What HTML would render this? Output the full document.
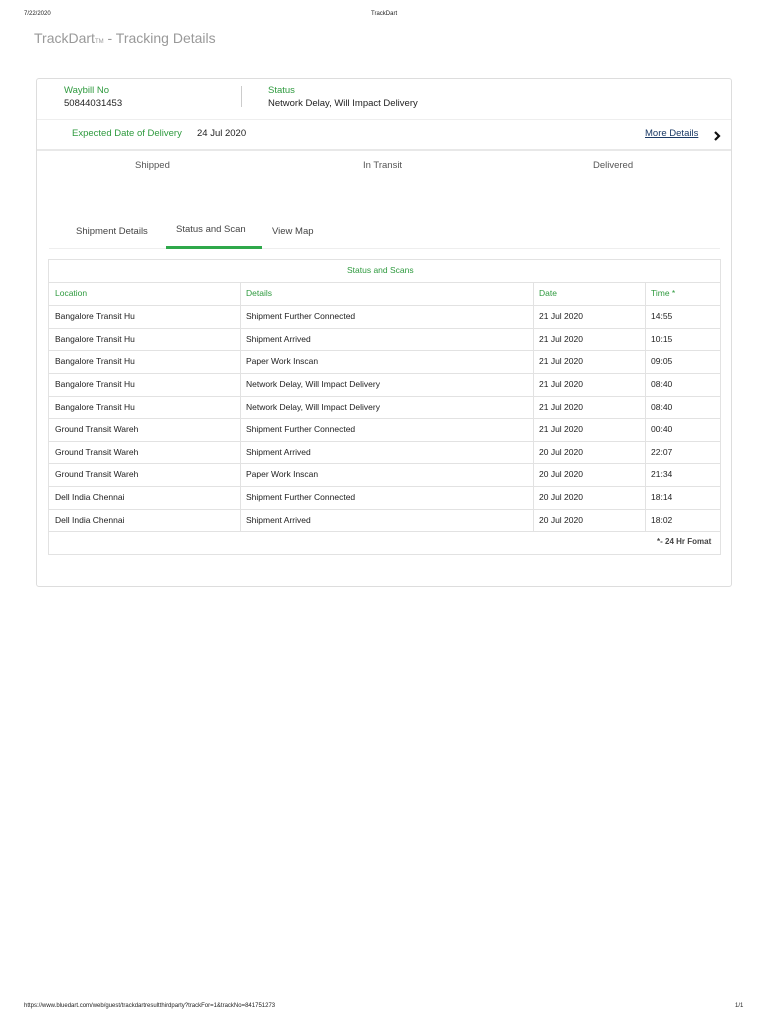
<!DOCTYPE html>
<html><head><meta charset="utf-8"><style>
body{margin:0;width:768px;height:1024px;background:#fff;font-family:"Liberation Sans",sans-serif;color:#222;position:relative;overflow:hidden}
.a{position:absolute;white-space:nowrap}
.g{color:#2e9a3e}
.t{font-size:8.5px}
.hl{position:absolute;height:1px;background:#e2e2e2}
.vl{position:absolute;width:1px;background:#e2e2e2}
</style></head><body>
<div class="a" style="left:24px;top:11px;font-size:6px">7/22/2020</div>
<div class="a" style="left:371px;top:11px;font-size:6px">TrackDart</div>
<div class="a" style="left:34px;top:30px;font-size:14px;color:#999">TrackDart<span style="font-size:6px">TM</span> - Tracking Details</div>

<div class="a" style="left:36px;top:78px;width:694px;height:507px;border:1px solid #ddd;border-radius:3px"></div>
<div class="a g" style="left:64px;top:85px;font-size:9.5px">Waybill No</div>
<div class="a" style="left:64px;top:98px;font-size:9.5px">50844031453</div>
<div class="vl" style="left:241px;top:86px;height:21px;background:#ccc"></div>
<div class="a g" style="left:268px;top:85px;font-size:9.5px">Status</div>
<div class="a" style="left:268px;top:98px;font-size:9.5px">Network Delay, Will Impact Delivery</div>
<div class="hl" style="left:37px;top:119px;width:694px;background:#eee"></div>
<div class="a g" style="left:72px;top:128px;font-size:9.5px">Expected Date of Delivery</div>
<div class="a" style="left:197px;top:128px;font-size:9.5px">24 Jul 2020</div>
<div class="a" style="left:645px;top:128px;font-size:9.5px;color:#1b3a66;text-decoration:underline">More Details</div>
<svg class="a" style="left:713px;top:131px" width="8" height="10" viewBox="0 0 8 10"><path d="M2 1 L6 5 L2 9" fill="none" stroke="#111" stroke-width="2.2"/></svg>
<div class="hl" style="left:37px;top:149px;width:694px;height:2px;background:#e8e8e8"></div>
<div class="a" style="left:135px;top:160px;font-size:9.5px;color:#555">Shipped</div>
<div class="a" style="left:363px;top:160px;font-size:9.5px;color:#555">In Transit</div>
<div class="a" style="left:593px;top:160px;font-size:9.5px;color:#555">Delivered</div>
<div class="a" style="left:76px;top:226px;font-size:9.5px;color:#444">Shipment Details</div>
<div class="a" style="left:176px;top:224px;font-size:9.5px;color:#444">Status and Scan</div>
<div class="a" style="left:272px;top:226px;font-size:9.5px;color:#444">View Map</div>
<div class="hl" style="left:49px;top:248px;width:671px;background:#eee"></div>
<div class="hl" style="left:166px;top:246px;width:96px;height:3px;background:#2ea84a"></div>

<div class="a" style="left:48px;top:259px;width:671px;height:294px;border:1px solid #e2e2e2"></div>
<div class="a g t" style="left:347px;top:265px">Status and Scans</div>
<div class="hl" style="left:49px;top:282px;width:671px"></div>
<div class="vl" style="left:240px;top:282px;height:249px"></div>
<div class="vl" style="left:533px;top:282px;height:249px"></div>
<div class="vl" style="left:645px;top:282px;height:249px"></div>
<div class="a g t" style="left:55px;top:288px">Location</div>
<div class="a g t" style="left:246px;top:288px">Details</div>
<div class="a g t" style="left:539px;top:288px">Date</div>
<div class="a g t" style="left:651px;top:288px">Time *</div>
<div class="hl" style="left:49px;top:305px;width:671px"></div>

<div class="a t" style="left:55px;top:311px">Bangalore Transit Hu</div><div class="a t" style="left:246px;top:311px">Shipment Further Connected</div><div class="a t" style="left:539px;top:311px">21 Jul 2020</div><div class="a t" style="left:651px;top:311px">14:55</div>
<div class="hl" style="left:49px;top:328px;width:671px"></div>
<div class="a t" style="left:55px;top:334px">Bangalore Transit Hu</div><div class="a t" style="left:246px;top:334px">Shipment Arrived</div><div class="a t" style="left:539px;top:334px">21 Jul 2020</div><div class="a t" style="left:651px;top:334px">10:15</div>
<div class="hl" style="left:49px;top:350px;width:671px"></div>
<div class="a t" style="left:55px;top:356px">Bangalore Transit Hu</div><div class="a t" style="left:246px;top:356px">Paper Work Inscan</div><div class="a t" style="left:539px;top:356px">21 Jul 2020</div><div class="a t" style="left:651px;top:356px">09:05</div>
<div class="hl" style="left:49px;top:373px;width:671px"></div>
<div class="a t" style="left:55px;top:379px">Bangalore Transit Hu</div><div class="a t" style="left:246px;top:379px">Network Delay, Will Impact Delivery</div><div class="a t" style="left:539px;top:379px">21 Jul 2020</div><div class="a t" style="left:651px;top:379px">08:40</div>
<div class="hl" style="left:49px;top:396px;width:671px"></div>
<div class="a t" style="left:55px;top:402px">Bangalore Transit Hu</div><div class="a t" style="left:246px;top:402px">Network Delay, Will Impact Delivery</div><div class="a t" style="left:539px;top:402px">21 Jul 2020</div><div class="a t" style="left:651px;top:402px">08:40</div>
<div class="hl" style="left:49px;top:418px;width:671px"></div>
<div class="a t" style="left:55px;top:424px">Ground Transit Wareh</div><div class="a t" style="left:246px;top:424px">Shipment Further Connected</div><div class="a t" style="left:539px;top:424px">21 Jul 2020</div><div class="a t" style="left:651px;top:424px">00:40</div>
<div class="hl" style="left:49px;top:441px;width:671px"></div>
<div class="a t" style="left:55px;top:447px">Ground Transit Wareh</div><div class="a t" style="left:246px;top:447px">Shipment Arrived</div><div class="a t" style="left:539px;top:447px">20 Jul 2020</div><div class="a t" style="left:651px;top:447px">22:07</div>
<div class="hl" style="left:49px;top:463px;width:671px"></div>
<div class="a t" style="left:55px;top:469px">Ground Transit Wareh</div><div class="a t" style="left:246px;top:469px">Paper Work Inscan</div><div class="a t" style="left:539px;top:469px">20 Jul 2020</div><div class="a t" style="left:651px;top:469px">21:34</div>
<div class="hl" style="left:49px;top:486px;width:671px"></div>
<div class="a t" style="left:55px;top:492px">Dell India Chennai</div><div class="a t" style="left:246px;top:492px">Shipment Further Connected</div><div class="a t" style="left:539px;top:492px">20 Jul 2020</div><div class="a t" style="left:651px;top:492px">18:14</div>
<div class="hl" style="left:49px;top:509px;width:671px"></div>
<div class="a t" style="left:55px;top:515px">Dell India Chennai</div><div class="a t" style="left:246px;top:515px">Shipment Arrived</div><div class="a t" style="left:539px;top:515px">20 Jul 2020</div><div class="a t" style="left:651px;top:515px">18:02</div>
<div class="hl" style="left:49px;top:531px;width:671px"></div>
<div class="a" style="left:657px;top:537px;font-size:8px;font-weight:bold;color:#444">*- 24 Hr Fomat</div>

<div class="a" style="left:24px;top:1003px;font-size:6px">https://www.bluedart.com/web/guest/trackdartresultthirdparty?trackFor=1&amp;trackNo=841751273</div>
<div class="a" style="left:735px;top:1003px;font-size:6px">1/1</div>
</body></html>
